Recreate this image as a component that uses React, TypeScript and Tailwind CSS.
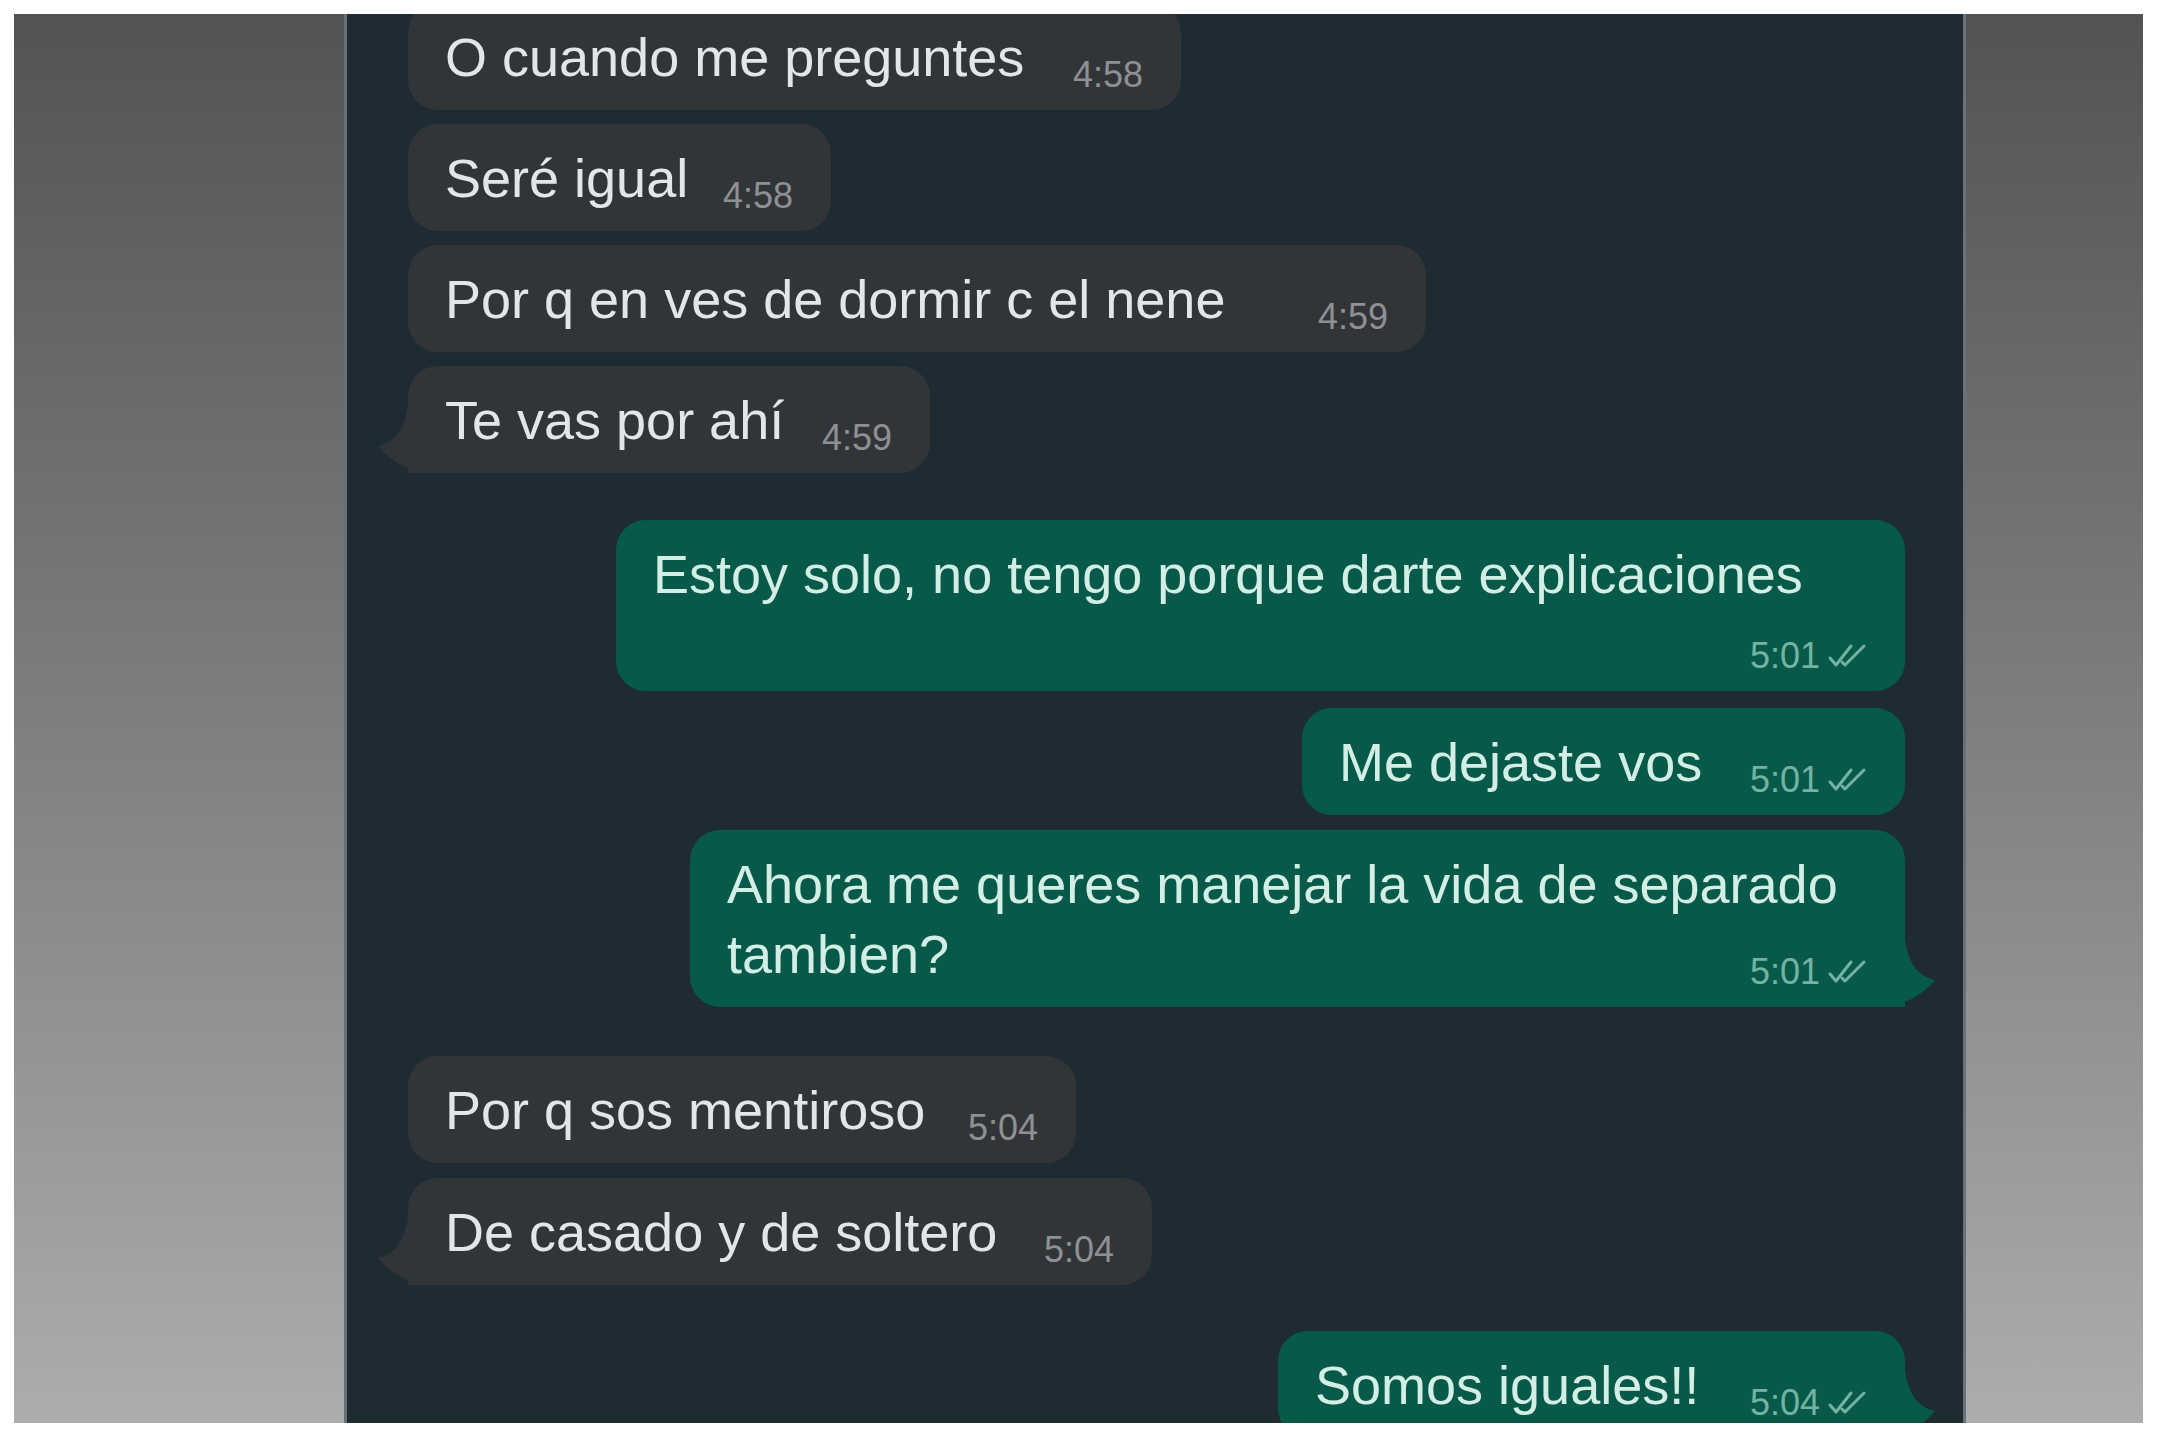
type Msg = {
  text: string;
  time: string;
  out: boolean;
  w: string;
  mt: string;
  tail?: boolean;
  timeBelow?: boolean;
};

const messages: Msg[] = [
  { text: "O cuando me preguntes", time: "4:58", out: false, w: "w-[773px]", mt: "-mt-[11px]" },
  { text: "Seré igual", time: "4:58", out: false, w: "w-[423px]", mt: "mt-[14px]" },
  { text: "Por q en ves de dormir c el nene", time: "4:59", out: false, w: "w-[1018px]", mt: "mt-[14px]" },
  { text: "Te vas por ahí", time: "4:59", out: false, w: "w-[522px]", mt: "mt-[14px]", tail: true },
  {
    text: "Estoy solo, no tengo porque darte explicaciones",
    time: "5:01",
    out: true,
    w: "w-[1289px]",
    mt: "mt-[47px]",
    timeBelow: true,
  },
  { text: "Me dejaste vos", time: "5:01", out: true, w: "w-[603px]", mt: "mt-[17px]" },
  {
    text: "Ahora me queres manejar la vida de separado tambien?",
    time: "5:01",
    out: true,
    w: "w-[1215px]",
    mt: "mt-[15px]",
    tail: true,
  },
  { text: "Por q sos mentiroso", time: "5:04", out: false, w: "w-[668px]", mt: "mt-[49px]" },
  { text: "De casado y de soltero", time: "5:04", out: false, w: "w-[744px]", mt: "mt-[15px]", tail: true },
  { text: "Somos iguales!!", time: "5:04", out: true, w: "w-[627px]", mt: "mt-[46px]", tail: true },
];

function Ticks() {
  return (
    <svg
      viewBox="0 0 40 26"
      className="h-[26px] w-[40px]"
      fill="none"
      stroke="currentColor"
      strokeWidth={3}
      strokeLinecap="round"
      strokeLinejoin="round"
    >
      <path d="M3 15l6 7L24 3" />
      <path d="M15 19l3 3L37 3" />
    </svg>
  );
}

function Tail({ out }: { out: boolean }) {
  // curved bubble tail, drawn in the bubble colour over its bottom corner
  return (
    <svg
      viewBox="0 0 60 86"
      className={
        out
          ? "absolute -right-[31px] bottom-0 h-[86px] w-[60px] -scale-x-100"
          : "absolute -left-[31px] bottom-0 h-[86px] w-[60px]"
      }
      fill={out ? "#07594a" : "#323538"}
    >
      <path d="M32 0C32 36 22 54 1 59C14 74 32 86 60 86L60 0Z" />
    </svg>
  );
}

function Bubble({ m }: { m: Msg }) {
  return (
    <div
      className={`relative rounded-[30px] pb-[15px] pl-[37px] pr-[38px] pt-[19px] ${m.w} ${m.mt} ${
        m.out ? "self-end bg-[#07594a] text-[#d3eee5]" : "self-start bg-[#323538] text-[#e4e5e6]"
      } ${m.tail ? (m.out ? "rounded-br-none" : "rounded-bl-none") : ""}`}
    >
      {m.tail && <Tail out={m.out} />}
      <p className="relative flow-root text-[54px] leading-[70px]">
        {m.text}
        <span
          className={`float-right ml-[30px] flex h-[40px] items-center gap-[7px] ${
            m.timeBelow ? "mt-[27px]" : "mt-[33px]"
          } ${m.out ? "text-[#74b3a2]" : "text-[#8e9093]"}`}
        >
          <span className="text-[36px] leading-none">{m.time}</span>
          {m.out && <Ticks />}
        </span>
      </p>
    </div>
  );
}

export default function App() {
  return (
    <div className="h-screen w-full bg-white pb-[17px] pl-[14px] pr-[17px] pt-[14px] font-['Liberation_Sans',Arial,sans-serif]">
      <div className="flex h-full bg-gradient-to-b from-[#535353] to-[#adadad]">
        <div className="ml-[330px] h-full w-[1622px] overflow-hidden border-x-[3px] border-[#66747a] bg-[#1f2b33]">
          <div className="flex flex-col pl-[61px] pr-[58px]">
            {messages.map((m, i) => (
              <Bubble key={i} m={m} />
            ))}
          </div>
        </div>
      </div>
    </div>
  );
}
